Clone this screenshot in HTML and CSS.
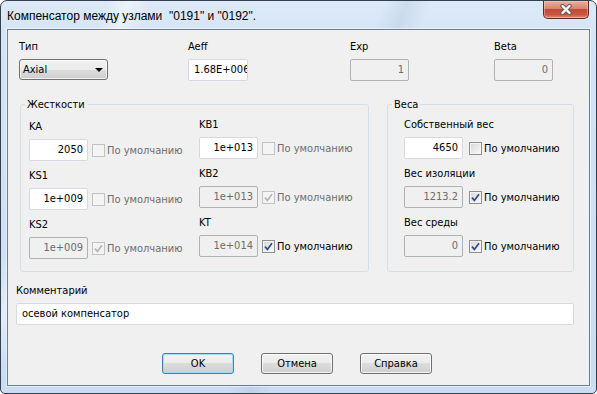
FILE: index.html
```html
<!DOCTYPE html>
<html lang="ru">

<head>
    <meta charset="UTF-8">
    <title>Компенсатор между узлами</title>
    <link rel="stylesheet" href="styles.css">
</head>

<body>

    <div class="window">
        <!-- Title bar -->
        <div class="titlebar">
            <span class="title">Компенсатор между узлами&nbsp; "0191" и "0192".</span>
            <div class="close-btn">
                <svg width="14" height="11" viewBox="0 0 14 11">
                    <path d="M3.5 2 L10.5 9 M10.5 2 L3.5 9" stroke="#6b5a57" stroke-width="4.4" stroke-linecap="round" />
                    <path d="M3.5 2 L10.5 9 M10.5 2 L3.5 9" stroke="#ffffff" stroke-width="2.4" stroke-linecap="round" />
                </svg>
            </div>
        </div>

        <div class="client">
            <!-- Top row -->
            <div class="top-row">
                <div class="field w-type">
                    <div class="lbl">Тип</div>
                    <div class="combo">Axial<span class="arrow"></span></div>
                </div>
                <div class="field w-aeff">
                    <div class="lbl">Aeff</div>
                    <div class="edit clip">1.68E+006</div>
                </div>
                <div class="field w-exp">
                    <div class="lbl">Exp</div>
                    <div class="edit off">1</div>
                </div>
                <div class="field">
                    <div class="lbl">Beta</div>
                    <div class="edit off">0</div>
                </div>
            </div>

            <!-- Group boxes -->
            <div class="groups">
                <fieldset class="group stiff">
                    <legend>Жесткости</legend>
                    <div class="cols">
                        <div class="col col-a">
                            <div class="field">
                                <div class="lbl">KA</div>
                                <div class="row">
                                    <div class="edit">2050</div>
                                    <span class="check dis"></span><span class="opt off">По умолчанию</span>
                                </div>
                            </div>
                            <div class="field">
                                <div class="lbl">KS1</div>
                                <div class="row">
                                    <div class="edit">1e+009</div>
                                    <span class="check dis"></span><span class="opt off">По умолчанию</span>
                                </div>
                            </div>
                            <div class="field">
                                <div class="lbl">KS2</div>
                                <div class="row">
                                    <div class="edit off">1e+009</div>
                                    <span class="check dis"><svg width="9" height="9" viewBox="0 0 9 9"><path d="M1 4.6 L3.4 7.4 L8 1.2" fill="none" stroke="#b4b4b4" stroke-width="1.7" /></svg></span><span class="opt off">По умолчанию</span>
                                </div>
                            </div>
                        </div>
                        <div class="col">
                            <div class="field">
                                <div class="lbl">KB1</div>
                                <div class="row">
                                    <div class="edit">1e+013</div>
                                    <span class="check dis"></span><span class="opt off">По умолчанию</span>
                                </div>
                            </div>
                            <div class="field">
                                <div class="lbl">KB2</div>
                                <div class="row">
                                    <div class="edit off">1e+013</div>
                                    <span class="check dis"><svg width="9" height="9" viewBox="0 0 9 9"><path d="M1 4.6 L3.4 7.4 L8 1.2" fill="none" stroke="#b4b4b4" stroke-width="1.7" /></svg></span><span class="opt off">По умолчанию</span>
                                </div>
                            </div>
                            <div class="field">
                                <div class="lbl">KT</div>
                                <div class="row">
                                    <div class="edit off">1e+014</div>
                                    <span class="check"><svg width="9" height="9" viewBox="0 0 9 9"><path d="M1 4.6 L3.4 7.4 L8 1.2" fill="none" stroke="#2e4a8f" stroke-width="1.7" /></svg></span><span class="opt">По умолчанию</span>
                                </div>
                            </div>
                        </div>
                    </div>
                </fieldset>

                <fieldset class="group weights">
                    <legend>Веса</legend>
                    <div class="cols">
                        <div class="col wide">
                            <div class="field">
                                <div class="lbl">Собственный вес</div>
                                <div class="row">
                                    <div class="edit">4650</div>
                                    <span class="check"></span><span class="opt">По умолчанию</span>
                                </div>
                            </div>
                            <div class="field">
                                <div class="lbl">Вес изоляции</div>
                                <div class="row">
                                    <div class="edit off">1213.2</div>
                                    <span class="check"><svg width="9" height="9" viewBox="0 0 9 9"><path d="M1 4.6 L3.4 7.4 L8 1.2" fill="none" stroke="#2e4a8f" stroke-width="1.7" /></svg></span><span class="opt">По умолчанию</span>
                                </div>
                            </div>
                            <div class="field">
                                <div class="lbl">Вес среды</div>
                                <div class="row">
                                    <div class="edit off">0</div>
                                    <span class="check"><svg width="9" height="9" viewBox="0 0 9 9"><path d="M1 4.6 L3.4 7.4 L8 1.2" fill="none" stroke="#2e4a8f" stroke-width="1.7" /></svg></span><span class="opt">По умолчанию</span>
                                </div>
                            </div>
                        </div>
                    </div>
                </fieldset>
            </div>

            <!-- Comment -->
            <div class="comment">
                <div class="lbl">Комментарий</div>
                <div class="edit long">осевой компенсатор</div>
            </div>

            <!-- Buttons -->
            <div class="buttons">
                <div class="btn default">OK</div>
                <div class="btn">Отмена</div>
                <div class="btn">Справка</div>
            </div>
        </div>
    </div>

</body>

</html>
```

FILE: styles.css
```css
* {
    box-sizing: border-box;
}

html,
body {
    margin: 0;
    padding: 0;
}

body {
    width: 597px;
    height: 394px;
    overflow: hidden;
    font-family: "DejaVu Sans Condensed", "Liberation Sans", sans-serif;
    font-size: 11px;
    color: #000;
    background: #fff;
}

.window {
    width: 597px;
    height: 394px;
    border: 1px solid #34404e;
    border-radius: 7px 7px 5px 5px;
    padding: 0 6px 7px 6px;
    display: flex;
    flex-direction: column;
    background:
        linear-gradient(112deg, transparent 14%, rgba(255, 255, 255, 0.45) 17%, transparent 20%, transparent 51%, rgba(150, 175, 205, 0.22) 54%, transparent 57%),
        linear-gradient(#dde9f7, #d3e4f6 10%, #c9ddf3);
}

/* Title bar */
.titlebar {
    height: 28px;
    display: flex;
    align-items: flex-start;
}

.title {
    padding-top: 8px;
    font-family: "Liberation Sans", sans-serif;
    font-size: 12px;
    line-height: 15px;
    white-space: nowrap;
}

.close-btn {
    margin-left: auto;
    margin-right: 1px;
    width: 46px;
    height: 18px;
    border: 1px solid #5b2a22;
    border-top: none;
    border-radius: 0 0 5px 5px;
    background: linear-gradient(#eab0a0, #d98470 45%, #c4493a 50%, #c9563f 80%, #e19172);
    box-shadow: inset 0 0 0 1px rgba(255, 210, 200, 0.45);
    display: flex;
    align-items: center;
    justify-content: center;
}

/* Client area */
.client {
    height: 357px;
    border: 1px solid #6d7e92;
    background: #f0f0f0;
    padding-top: 10px;
    box-shadow: 0 0 0 1px rgba(255, 255, 255, 0.5);
}

.top-row {
    display: flex;
    height: 42px;
    padding-left: 11px;
}

.w-type {
    width: 169px;
}

.w-aeff {
    width: 162px;
}

.w-exp {
    width: 144px;
}

.lbl {
    height: 13px;
    line-height: 13px;
    margin-bottom: 6px;
    white-space: nowrap;
}

.edit {
    width: 59px;
    height: 22px;
    border: 1px solid #d6dae0;
    border-radius: 2px;
    background: #fff;
    padding: 0 4px;
    line-height: 20px;
    text-align: right;
    white-space: nowrap;
    overflow: hidden;
    flex: none;
}

.edit.off {
    background: #f0f0f0;
    border-color: #adb2b5;
    color: #6d6d6d;
}

.edit.clip {
    width: 60px;
    text-align: left;
    padding: 0 0 0 5px;
}

.edit.long {
    width: 558px;
    text-align: left;
    padding-left: 5px;
}

.combo {
    width: 89px;
    height: 21px;
    margin-top: 2px;
    border: 1px solid #707070;
    border-radius: 3px;
    background: linear-gradient(#f2f2f2, #ebebeb 50%, #dddddd 50%, #cfcfcf);
    box-shadow: inset 0 0 0 1px rgba(255, 255, 255, 0.7);
    padding-left: 3px;
    line-height: 19px;
    display: flex;
    align-items: center;
}

.combo .arrow {
    margin-left: auto;
    margin-right: 4px;
    border-left: 4px solid transparent;
    border-right: 4px solid transparent;
    border-top: 4px solid #000;
}

/* Group boxes */
.groups {
    display: flex;
    gap: 18px;
    margin: 16px 0 0 12px;
}

.group {
    margin: 0;
    padding: 7px 0 12px 4px;
    border: 1px solid #d5dfe5;
    border-radius: 3px;
    min-width: 0;
}

.group legend {
    padding: 0 2px;
    line-height: 13px;
}

.stiff {
    width: 349px;
}

.weights {
    width: 187px;
}

.cols {
    display: flex;
    padding-left: 4px;
}

.weights .cols {
    padding-left: 12px;
}

.col {
    display: flex;
    flex-direction: column;
    gap: 8px;
}

.col-a {
    width: 170px;
    margin-top: 2px;
}

.row {
    display: flex;
    align-items: center;
    height: 22px;
}

.check {
    width: 13px;
    height: 13px;
    margin-left: 4px;
    border: 1px solid #8e8f8f;
    background: linear-gradient(135deg, #d6d6d6, #fbfbfb);
    box-shadow: inset 0 0 0 1px #f4f4f4;
    display: flex;
    align-items: center;
    justify-content: center;
    flex: none;
}

.check.dis {
    border-color: #c2c2c2;
    background: #f4f4f4;
    box-shadow: none;
}

.wide .check {
    margin-left: 6px;
}

.opt {
    margin-left: 2px;
    white-space: nowrap;
}

.opt.off {
    color: #6d6d6d;
}

/* Comment */
.comment {
    margin: 12px 0 0 8px;
}

/* Buttons */
.buttons {
    display: flex;
    gap: 27px;
    margin: 28px 0 0 154px;
}

.btn {
    width: 72px;
    height: 21px;
    border: 1px solid #707070;
    border-radius: 3px;
    background: linear-gradient(#f2f2f2, #ebebeb 50%, #dddddd 50%, #cfcfcf);
    box-shadow: inset 0 0 0 1px rgba(255, 255, 255, 0.75);
    text-align: center;
    line-height: 19px;
}

.btn.default {
    border-color: #3c7fb1;
    box-shadow: inset 0 0 0 1px #a6dbf6;
}
```
